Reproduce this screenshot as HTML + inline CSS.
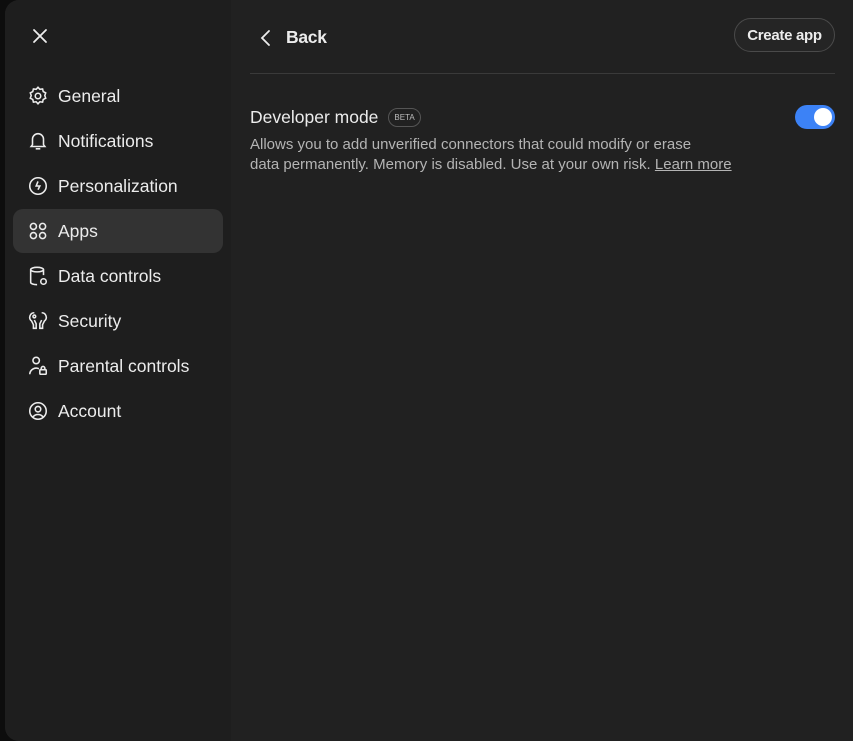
<!DOCTYPE html><html><head><style>
body{margin:0;width:853px;height:741px;background:#0d0d0d;overflow:hidden;font-family:"Liberation Sans",sans-serif;color:#ececec}
.panel{position:absolute;left:5px;top:0;width:848px;height:741px;background:#212121;border-radius:14px 0 0 14px;overflow:hidden}
.side{position:absolute;left:0;top:0;width:226px;height:741px;background:#1e1e1e}
.close{position:absolute;left:26px;top:27px}
.item{position:absolute;left:8px;width:210px;height:44px;border-radius:10px;display:flex;align-items:center;font-size:17.5px;color:#ececec}
.item svg{margin-left:14px;margin-right:9px}
.sel{background:#333}
.back{position:absolute;left:255px;top:27px;display:flex;align-items:center;font-size:17.5px;font-weight:bold;letter-spacing:-0.3px}
.btn{position:absolute;left:729px;top:18px;width:101px;height:34px;border:1px solid #4a4a4a;border-radius:18px;box-sizing:border-box;font-size:15px;font-weight:bold;letter-spacing:-0.3px;display:flex;align-items:center;justify-content:center;background:#252525}
.hr{position:absolute;left:245px;top:73px;width:585px;height:1px;background:#3a3a3a}
.title{position:absolute;left:245px;top:107px;font-size:17.5px;display:flex;align-items:center}
.beta{margin-left:10px;font-size:8px;border:1px solid #555;border-radius:10px;padding:4px 5px;color:#bbb}
.desc{position:absolute;left:245px;top:135px;font-size:15px;line-height:20px;color:#b4b4b4;white-space:nowrap}
.desc u{color:#b4b4b4}
.tog{position:absolute;left:790px;top:105px;width:40px;height:24px;border-radius:12px;background:#3c82f6}
.tog:after{content:"";position:absolute;right:3px;top:3px;width:18px;height:18px;border-radius:50%;background:#fff}
</style></head><body><div class="panel">
<div class="side">
<svg class="close" width="18" height="18" viewBox="0 0 18 18" stroke="#ececec" stroke-width="1.8" stroke-linecap="round"><path d="M3 3L15 15M15 3L3 15"/></svg>
<div class="item" style="top:74px"><svg width="22" height="22" viewBox="0 0 24 24" fill="none" stroke="#ececec" stroke-width="1.7"><path d="M12 2.5l2 2.2 3-.4.7 2.9 2.7 1.4-1 2.9 1 2.9-2.7 1.4-.7 2.9-3-.4-2 2.2-2-2.2-3 .4-.7-2.9-2.7-1.4 1-2.9-1-2.9 2.7-1.4.7-2.9 3 .4z"/><circle cx="12" cy="12" r="3"/></svg>General</div>
<div class="item" style="top:119px"><svg width="22" height="22" viewBox="0 0 24 24" fill="none" stroke="#ececec" stroke-width="1.7"><path d="M6 16V10a6 6 0 0112 0v6l1.5 2h-15z"/><path d="M9.5 20.5h5"/></svg>Notifications</div>
<div class="item" style="top:164px"><svg width="22" height="22" viewBox="0 0 24 24" fill="none" stroke="#ececec" stroke-width="1.7"><circle cx="12" cy="12" r="9"/><path d="M12 7l-2 5h4l-2 4"/></svg>Personalization</div>
<div class="item sel" style="top:209px"><svg width="22" height="22" viewBox="0 0 24 24" fill="none" stroke="#ececec" stroke-width="1.7"><circle cx="7" cy="7" r="3.3"/><circle cx="17" cy="7" r="3.3"/><circle cx="7" cy="17" r="3.3"/><circle cx="17" cy="17" r="3.3"/></svg>Apps</div>
<div class="item" style="top:254px"><svg width="22" height="22" viewBox="0 0 24 24" fill="none" stroke="#ececec" stroke-width="1.7"><ellipse cx="11" cy="5" rx="7" ry="2.5"/><path d="M4 5v14c0 1.4 3 2.5 7 2.5M18 5v6"/><circle cx="18" cy="18" r="3"/></svg>Data controls</div>
<div class="item" style="top:299px"><svg width="22" height="22" viewBox="0 0 24 24" fill="none" stroke="#ececec" stroke-width="1.7"><path d="M8 3a5 5 0 00-3 9l2 4v4h3v-5l-2-4M16 3a5 5 0 013 9l-2 4v4h-3v-5l2-4"/><circle cx="8" cy="7" r="1.5"/></svg>Security</div>
<div class="item" style="top:344px"><svg width="22" height="22" viewBox="0 0 24 24" fill="none" stroke="#ececec" stroke-width="1.7"><circle cx="10" cy="6" r="3.5"/><path d="M3 21a7 7 0 0110-6"/><rect x="14" y="16" width="7" height="5" rx="1"/><path d="M15.5 16v-1.5a2 2 0 014 0V16"/></svg>Parental controls</div>
<div class="item" style="top:389px"><svg width="22" height="22" viewBox="0 0 24 24" fill="none" stroke="#ececec" stroke-width="1.7"><circle cx="12" cy="12" r="9"/><circle cx="12" cy="10" r="3"/><path d="M6.5 18.5a7 7 0 0111 0"/></svg>Account</div>
</div>
<div class="back"><svg width="12" height="18" viewBox="0 0 12 18" fill="none" stroke="#ececec" stroke-width="1.8" stroke-linecap="round"><path d="M9 2L2 9l7 7"/></svg><span style="margin-left:14px">Back</span></div>
<div class="btn">Create app</div>
<div class="hr"></div>
<div class="title">Developer mode<span class="beta">BETA</span></div>
<div class="desc">Allows you to add unverified connectors that could modify or erase<br>data permanently. Memory is disabled. Use at your own risk. <u>Learn more</u></div>
<div class="tog"></div>
</div></body></html>
